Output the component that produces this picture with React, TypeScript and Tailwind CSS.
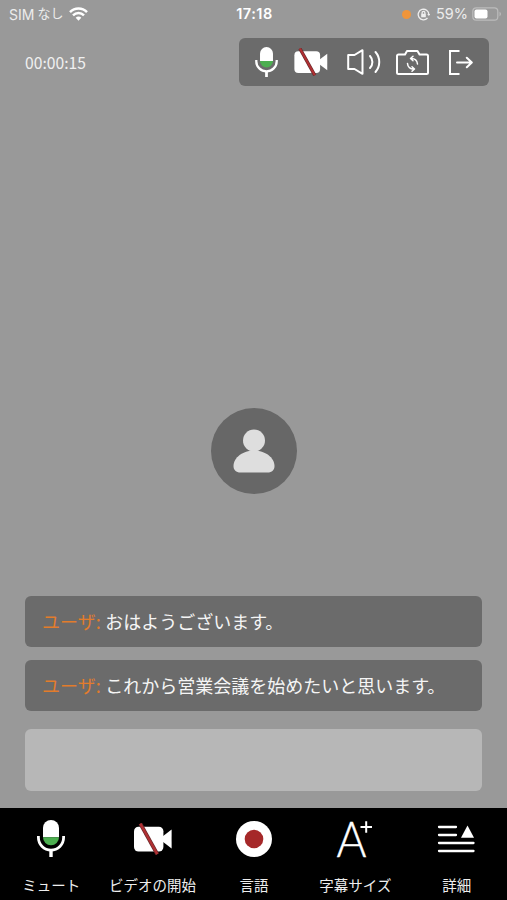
import type { ReactNode } from 'react'

interface IconProps {
  className?: string
}

function MicIcon({ className }: IconProps) {
  return (
    <svg viewBox="0 0 28 37" className={className} fill="none">
      <path d="M6 8a8 8 0 0 1 16 0v9.3H6z" fill="#fff" />
      <path d="M6 17.3h16a8 8 0 0 1-16 0z" fill="#4caf50" />
      <path d="M1.4 16v1.5a12.6 12.6 0 0 0 25.2 0V16" stroke="#fff" strokeWidth="2.8" />
      <path d="M14 30v7" stroke="#fff" strokeWidth="3.4" />
    </svg>
  )
}

function VideoOffIcon({ className }: IconProps) {
  return (
    <svg viewBox="0 0 38 32" className={className} fill="none">
      <rect x="0" y="3.8" width="29.4" height="24.8" rx="4.5" fill="#fff" />
      <path d="M28.5 13.5L37.6 6.6v18.8L28.5 18.5z" fill="#fff" />
      <path d="M6.3.6L23.3 31.2" stroke="#64282a" strokeWidth="3.8" />
      <path d="M6.3.6L23.3 31.2" stroke="#b03033" strokeWidth="2.4" />
    </svg>
  )
}

function SpeakerIcon({ className }: IconProps) {
  return (
    <svg viewBox="0 0 34 26" className={className} fill="none" stroke="#fff" strokeWidth="2" strokeLinejoin="round" strokeLinecap="round">
      <path d="M1.2 6h6.3l8-4.8v23.6L7.5 20H1.2z" />
      <path d="M23 7c3.2 3.5 3.2 8.5 0 12" />
      <path d="M28.5 3c5 5.8 5 14.2 0 20" />
    </svg>
  )
}

function FlipCameraIcon({ className }: IconProps) {
  return (
    <svg viewBox="0 0 33 25" className={className} fill="none" stroke="#fff" strokeWidth="2" strokeLinejoin="round" strokeLinecap="round">
      <path d="M2.5 4.5H9L11 1h10.500l2 3.500h7A1.500 1.500 0 0 1 32 6v16.500a1.500 1.500 0 0 1-1.500 1.500h-28A1.500 1.500 0 0 1 1 22.500V6a1.500 1.500 0 0 1 1.500-1.500z" />
      <g strokeWidth="1.500">
        <path d="M15 8.500c3.800-.3 6.300 2 6.500 5.500M17 6.200l-2.500 2.300 2.500 2.300" />
        <path d="M18 19c-3.800.3-6.300-2-6.500-5.500M16 21.300l2.500-2.300-2.500-2.300" />
      </g>
    </svg>
  )
}

function LeaveIcon({ className }: IconProps) {
  return (
    <svg viewBox="0 0 24 25" className={className} fill="none" stroke="#fff" strokeWidth="2">
      <path d="M10.5 1H1v23h9.5" />
      <path d="M8 12.5h14.5M17.8 7.8l5 4.7-5 4.7" strokeLinecap="round" strokeLinejoin="round" />
    </svg>
  )
}

function RecordIcon() {
  return (
    <svg viewBox="0 0 36 36" className="size-9">
      <circle cx="18" cy="18" r="18" fill="#fff" />
      <circle cx="18" cy="18" r="9.3" fill="#a52829" />
    </svg>
  )
}

function TextSizeIcon() {
  return (
    <svg viewBox="0 0 36 37" className="h-[37px] w-9 overflow-visible">
      <text x="-0.5" y="36.5" textLength="30" lengthAdjust="spacingAndGlyphs" fill="#fff" stroke="#fff" strokeWidth=".4" className="font-['Lato'] text-[50px] font-light">A</text>
      <path d="M23.5 7H35M29.2 1.200v11.600" stroke="#fff" strokeWidth="2" />
    </svg>
  )
}

function DetailIcon() {
  return (
    <svg viewBox="0 0 38 28" className="mr-px h-7 w-[38px]" stroke="#fff" strokeWidth="2.3" strokeLinecap="round">
      <path d="M2 2h17M2 10h17M2 18h34.500M2 26h34.500" />
      <path d="M30.500.5L37 12.800H24z" fill="#fff" stroke="none" />
    </svg>
  )
}

function StatusBar() {
  return (
    <div className="grid h-7 grid-cols-3 items-center pl-[9px] pr-[7px] font-['Inter','Noto_Sans_CJK_JP',sans-serif] text-[14px] text-[#ececec]">
      <div className="flex items-center gap-1.5">
        <span className="flex items-center whitespace-nowrap">SIM<span className="ml-[3px] text-[13px]">なし</span></span>
        <svg viewBox="0 0 19 14" className="h-[14px] w-[19px]" fill="none" stroke="#fff" strokeWidth="2.5">
          <path d="M1 5.200c4.800-4.900 12.200-4.900 17 0" />
          <path d="M4 8.300c3.200-3.100 7.800-3.100 11 0" />
          <path d="M6.700 10.700L9.500 13.700l2.800-3c-1.500-1.500-4.100-1.500-5.600 0z" fill="#fff" stroke="none" />
        </svg>
      </div>
      <div className="text-center text-[14.5px] font-semibold tracking-[0.5px] text-white">17:18</div>
      <div className="flex items-center justify-end">
        <span className="size-[9px] rounded-full bg-[#f0953a]" />
        <svg viewBox="0 0 14 14" className="ml-1.5 size-[13px]" fill="none" stroke="#eee" strokeWidth="1.4">
          <path d="M11.300 10.800A5.700 5.700 0 1 1 12.700 7" />
          <path d="M11 6.500h3.400l-1.700 2.200z" fill="#eee" stroke="none" />
          <rect x="4.500" y="6.300" width="5" height="3.700" rx=".6" fill="#eee" stroke="none" />
          <path d="M5.500 6.500V5.200a1.500 1.500 0 0 1 3 0v1.300" />
        </svg>
        <span className="ml-1.5 text-[14.5px]">59%</span>
        <svg viewBox="0 0 30 14" className="ml-1 -mr-0.5 h-[14px] w-[30px]" fill="none">
          <rect x=".8" y=".8" width="25" height="12.400" rx="3.500" stroke="#bcbcbc" strokeWidth="1.200" />
          <rect x="2.500" y="2.500" width="13" height="9" rx="2" fill="#fff" />
          <path d="M27.500 4.800c2 .8 2 3.600 0 4.400z" fill="#bcbcbc" />
        </svg>
      </div>
    </div>
  )
}

function Caption({ name, children }: { name: string; children: ReactNode }) {
  return (
    <p className="flex h-[51px] items-center gap-[4.5px] whitespace-nowrap rounded-md bg-[#6b6b6b] pl-[17px] text-[18px] text-[#f5f5f5]">
      <span className="text-[#e27c2c]">{name}:</span>
      <span>{children}</span>
    </p>
  )
}

const navItems = [
  { label: 'ミュート', icon: <MicIcon className="h-[37px] w-7" /> },
  { label: 'ビデオの開始', icon: <VideoOffIcon className="h-8 w-[38px]" /> },
  { label: '言語', icon: <RecordIcon /> },
  { label: '字幕サイズ', icon: <TextSizeIcon /> },
  { label: '詳細', icon: <DetailIcon /> },
]

export default function App() {
  return (
    <div className="flex h-[900px] w-[507px] flex-col overflow-hidden bg-[#999] font-['Noto_Sans_CJK_JP',sans-serif]">
      <StatusBar />

      <header className="mt-[10px] flex h-12 items-center justify-between pl-[25px] pr-[18px]">
        <span className="pt-0.5 text-[15.7px] text-[#f0f0f0]">00:00:15</span>
        <div className="flex h-12 w-[250px] items-center rounded-md bg-[#6b6b6b] pl-4">
          <MicIcon className="h-[30px] w-[23px]" />
          <VideoOffIcon className="ml-4 h-[28px] w-[34px]" />
          <SpeakerIcon className="ml-[19px] h-[26px] w-[34px]" />
          <FlipCameraIcon className="ml-[15px] h-[25px] w-[33px]" />
          <LeaveIcon className="ml-[20px] h-[25px] w-[24px]" />
        </div>
      </header>

      <main className="flex flex-1 flex-col px-[25px]">
        <div className="mt-[321.5px] flex size-[86px] items-center justify-center self-center rounded-full bg-[#676767]">
          <svg viewBox="0 0 42 44" className="h-11 w-[42px]" fill="#dedede">
            <circle cx="21" cy="11.500" r="11" />
            <path d="M21 21.500c11 0 20.500 7 20.500 15.500 0 4-2.500 6.500-7 6.500h-27c-4.500 0-7-2.500-7-6.500C.5 28.500 10 21.500 21 21.500z" />
          </svg>
        </div>

        <div className="mt-[102.5px] flex flex-col gap-[13px]">
          <Caption name="ユーザ">おはようございます。</Caption>
          <Caption name="ユーザ">これから営業会議を始めたいと思います。</Caption>
        </div>
        <div className="mt-[18px] h-[61.5px] rounded-md bg-[#b7b7b7]" />
      </main>

      <nav className="grid h-[92px] grid-cols-5 bg-black text-[14.5px] text-[#eee]">
        {navItems.map((item) => (
          <button key={item.label} className="flex flex-col items-center whitespace-nowrap pl-px pt-3">
            <span className="flex h-[37px] items-center">{item.icon}</span>
            <span className="mt-[17px] leading-[22px]">{item.label}</span>
          </button>
        ))}
      </nav>
    </div>
  )
}
